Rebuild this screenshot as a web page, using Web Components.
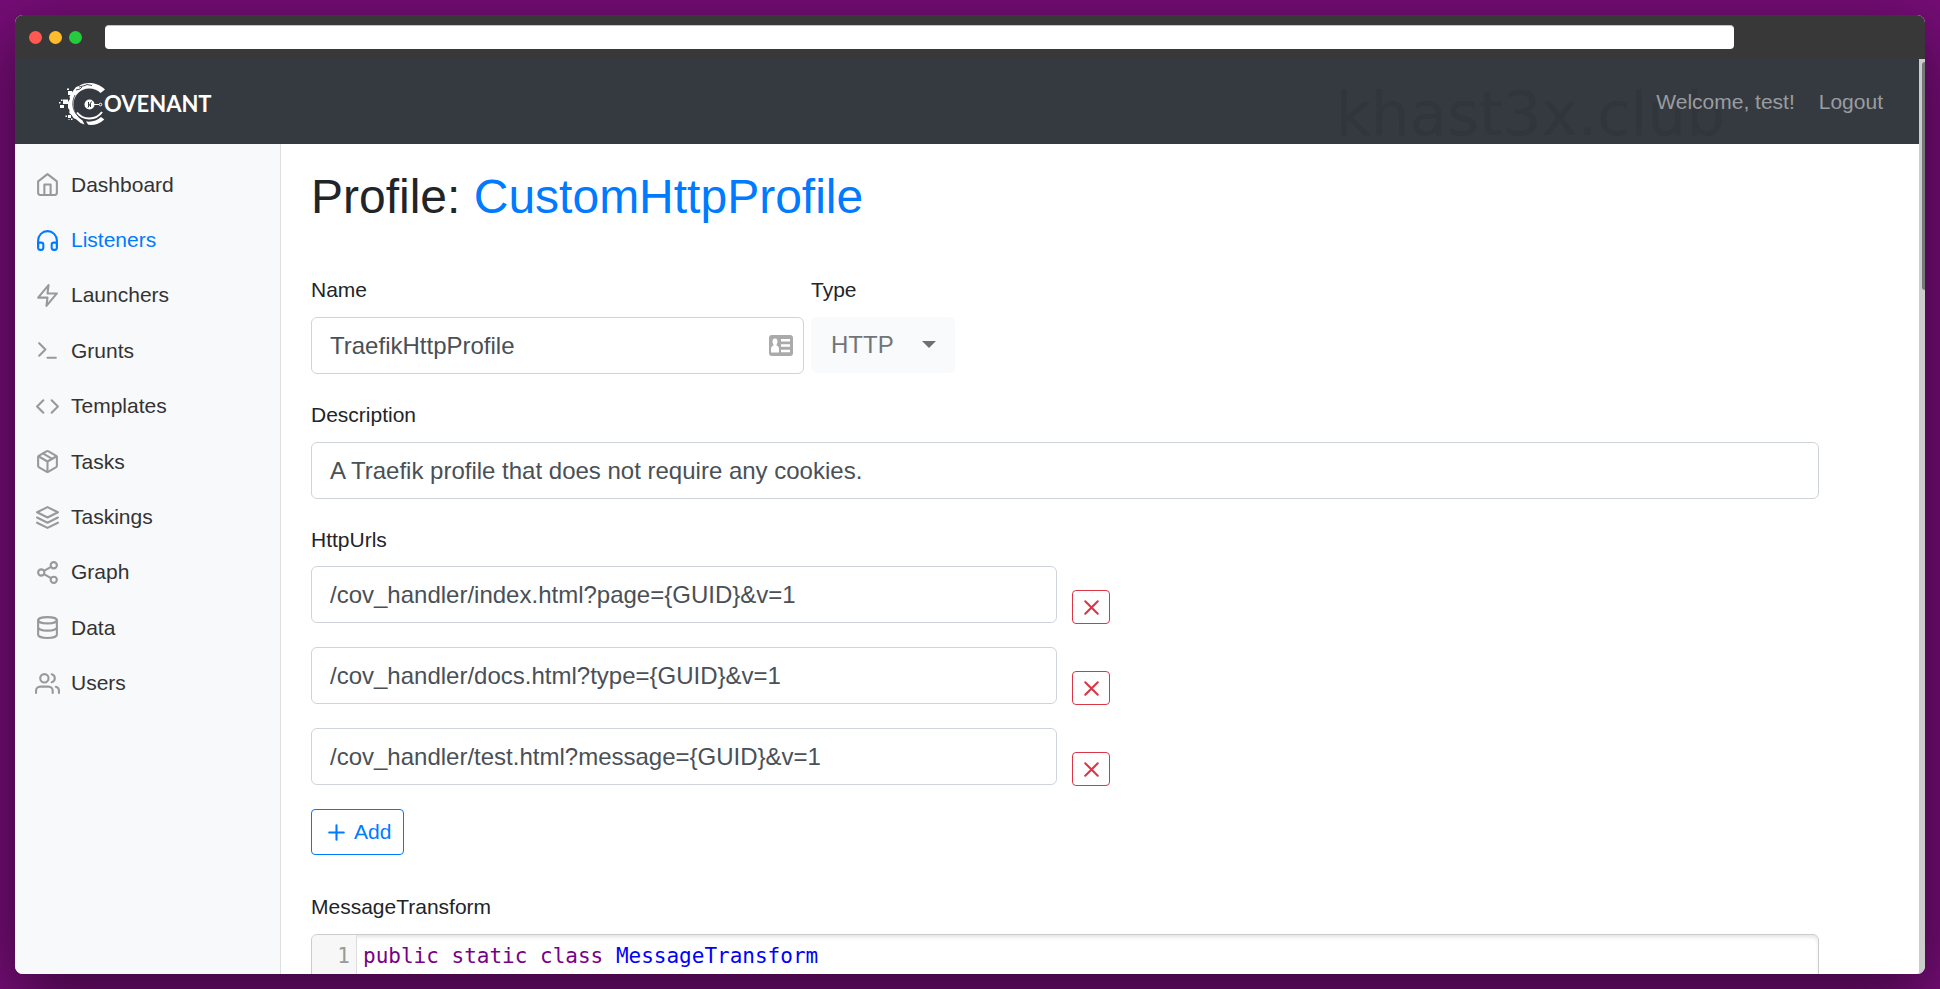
<!DOCTYPE html>
<html lang="en">
<head>
<meta charset="utf-8">
<title>Covenant</title>
<style>
  html, body { height: 100%; margin: 0; }
  body {
    box-sizing: border-box;
    padding: 15px;
    overflow: hidden;
    background: #760d77;
    font-family: "Liberation Sans", Arial, sans-serif;
    font-size: 21px;
    line-height: 32px;
    color: #212529;
  }
</style>
</head>
<body>
<browser-window>
  <nav-bar slot="nav" user="test"></nav-bar>
  <side-bar slot="side"></side-bar>
  <profile-form></profile-form>
</browser-window>

<script>
const define = (name, render) => customElements.define(name, class extends HTMLElement {
  constructor() {
    super();
    this.attachShadow({ mode: "open" });
  }
  connectedCallback() {
    const template = document.createElement("template");
    template.innerHTML = `<style>*{box-sizing:border-box}</style>` + render(this);
    this.shadowRoot.replaceChildren(template.content.cloneNode(true));
  }
});

const icons = {
  home: '<path d="M3 9l9-7 9 7v11a2 2 0 0 1-2 2H5a2 2 0 0 1-2-2z"/><path d="M9 22V12h6v10"/>',
  headphones: '<path d="M3 18v-6a9 9 0 0 1 18 0v6"/><path d="M21 19a2 2 0 0 1-2 2h-1a2 2 0 0 1-2-2v-3a2 2 0 0 1 2-2h3zM3 19a2 2 0 0 0 2 2h1a2 2 0 0 0 2-2v-3a2 2 0 0 0-2-2H3z"/>',
  zap: '<path d="M13 2L3 14h9l-1 8 10-12h-9l1-8z"/>',
  terminal: '<path d="M4 17l6-6-6-6M12 19h8"/>',
  code: '<path d="M16 18l6-6-6-6M8 6l-6 6 6 6"/>',
  package: '<path d="M16.5 9.4l-9-5.19M21 16V8a2 2 0 0 0-1-1.73l-7-4a2 2 0 0 0-2 0l-7 4A2 2 0 0 0 3 8v8a2 2 0 0 0 1 1.73l7 4a2 2 0 0 0 2 0l7-4A2 2 0 0 0 21 16z"/><path d="M3.27 6.96L12 12.01l8.73-5.05M12 22.08V12"/>',
  layers: '<path d="M12 2L2 7l10 5 10-5-10-5zM2 17l10 5 10-5M2 12l10 5 10-5"/>',
  share: '<circle cx="18" cy="5" r="3"/><circle cx="6" cy="12" r="3"/><circle cx="18" cy="19" r="3"/><path d="M8.59 13.51l6.83 3.98M15.41 6.51l-6.82 3.98"/>',
  database: '<ellipse cx="12" cy="5" rx="9" ry="3"/><path d="M21 12c0 1.66-4 3-9 3s-9-1.34-9-3"/><path d="M3 5v14c0 1.66 4 3 9 3s9-1.34 9-3V5"/>',
  users: '<path d="M17 21v-2a4 4 0 0 0-4-4H5a4 4 0 0 0-4 4v2"/><circle cx="9" cy="7" r="4"/><path d="M23 21v-2a4 4 0 0 0-3-3.87M16 3.13a4 4 0 0 1 0 7.75"/>',
  plus: '<path d="M12 5v14M5 12h14"/>',
  x: '<path d="M18 6L6 18M6 6l12 12"/>'
};

define("line-icon", el => `
  <style>
    :host { display: block; width: 25px; height: 25px; flex: none; }
    svg { display: block; width: 100%; height: 100%; fill: none; stroke: currentColor; stroke-width: 2; stroke-linecap: round; stroke-linejoin: round; }
  </style>
  <svg viewBox="0 0 24 24" aria-hidden="true">${icons[el.getAttribute("name")]}</svg>`);

define("browser-window", () => `
  <style>
    :host { display: flex; flex-direction: column; height: 100%; border-radius: 8px; overflow: hidden; background: #fff; box-shadow: 0 20px 68px rgba(0,0,0,.55); }
    .title { flex: none; display: flex; align-items: center; height: 44px; padding: 0 10% 0 14px; background: #383838; }
    .dots { display: flex; gap: 7px; margin-right: 23px; }
    .dots i { width: 13px; height: 13px; border-radius: 50%; background: #ff5a52; }
    .dots i:nth-child(2) { background: #ffbd2e; }
    .dots i:nth-child(3) { background: #27c93f; }
    input { flex: 1; min-width: 0; height: 24px; padding: 0 8px; border: 0; border-top: 1px solid #c4c4c4; border-radius: 4px; background: #fff; font: 14px "Liberation Sans", sans-serif; }
    .view { flex: 1; min-height: 0; display: flex; }
    .page { flex: 1; min-width: 0; display: flex; flex-direction: column; }
    .columns { flex: 1; min-height: 0; display: flex; }
    .content { flex: 1; min-width: 0; overflow: hidden; }
    .track { flex: none; width: 6px; padding: 3px 0 0 3px; background: #ccc; }
    .thumb { height: 25%; border-radius: 3px 0 0 3px; background: #747879; }
  </style>
  <div class="title">
    <div class="dots"><i></i><i></i><i></i></div>
    <input type="text" aria-label="Address">
  </div>
  <div class="view">
    <div class="page">
      <slot name="nav"></slot>
      <div class="columns">
        <slot name="side"></slot>
        <div class="content"><slot></slot></div>
      </div>
    </div>
    <div class="track"><div class="thumb"></div></div>
  </div>`);

define("covenant-logo", () => `
  <style>
    :host { display: block; padding-top: 4px; }
    svg { display: block; width: 154px; height: 42px; fill: #fff; }
    text { font: 700 22px Lato, sans-serif; }
  </style>
  <svg viewBox="0 0 154 42" role="img" aria-label="Covenant">
    <path d="M46 6.500C41 1.500 35.500 0 30 0 26 0 22.500 1 20 3l-3 1-3 4-1 1.500-2.500 4 .5 2.500-2 3V25l1.500 2-.2 3 2.200 2 2 3 3 1.500 4 3.500 4 1.500-2-4C18 34 14.500 28 14.500 21.500 14.500 12 22 5.500 30 5.500c5 0 8.500 1.500 11.500 4.500z"/>
    <path d="M16 12c-4 8-2.500 16 3.500 21.500" fill="none" stroke="#353a41" stroke-width=".8"/>
    <path d="M20 4l6-1.500 2-1 5 1M17 7l4-1 2-2" fill="none" stroke="#353a41" stroke-width=".9"/>
    <path d="M18 29.500C24 37.500 37 37.500 43 29" fill="none" stroke="#fff" stroke-width="2"/>
    <path d="M27 38.500c6 .7 11-.8 15-4.500l3.300 2.500c-5 4.500-10.500 6-16 5.300z"/>
    <path d="M24 36l3.500 5.500" stroke="#353a41" stroke-width="1"/>
    <circle cx="30.500" cy="21.500" r="5"/>
    <path d="M29 24.500l3.500-6M29.500 19v4M31.500 21v3" stroke="#353a41" stroke-width="1"/>
    <path d="M35 21.500h5" stroke="#fff" stroke-width="1"/>
    <circle cx="41.500" cy="21.500" r="1.300" fill="none" stroke="#fff" stroke-width="1"/>
    <path d="M9 8h4v4H9zM8 5.500h2v1.500H8zM4 16.500h5v4.500H4zM1 22h4v3H1zM0 19h1.500v1.500H0zM2 16.500h1.500V18H2zM9 32h3v3H9zM6.500 32.500H8V34H6.500zM12 35.500h1.500V37H12zM9.500 36h1v1h-1z"/>
    <text x="45" y="29">OVENANT</text>
  </svg>`);

define("nav-bar", el => `
  <style>
    :host { position: relative; flex: none; display: flex; align-items: center; height: 85px; padding: 0 36px 0 44px; background: #353a41; }
    nav { position: relative; display: flex; gap: 24px; margin-left: auto; }
    a { color: #9a9da0; text-decoration: none; }
    .mark { position: absolute; right: 194px; top: 24px; font: 61px/61px "DejaVu Sans", sans-serif; color: #31353c; }
  </style>
  <covenant-logo></covenant-logo>
  <span class="mark">khast3x.club</span>
  <nav><a href="#profile">Welcome, ${el.getAttribute("user")}!</a><a href="#logout">Logout</a></nav>`);

const pages = [
  ["home", "Dashboard"], ["headphones", "Listeners"], ["zap", "Launchers"], ["terminal", "Grunts"],
  ["code", "Templates"], ["package", "Tasks"], ["layers", "Taskings"], ["share", "Graph"],
  ["database", "Data"], ["users", "Users"]
];

define("side-bar", () => `
  <style>
    :host { flex: none; box-sizing: border-box; width: 266px; padding-top: 13px; border-right: 1px solid #dcdfe2; background: #f8f9fb; }
    ul { display: grid; grid-auto-rows: 1fr; height: 554px; margin: 0; padding: 0; list-style: none; }
    a { display: flex; align-items: center; gap: 11px; height: 100%; padding-left: 20px; color: #333; text-decoration: none; }
    line-icon { color: #999; }
    a[aria-current], a[aria-current] line-icon { color: #007bff; }
  </style>
  <nav><ul>${pages.map(([icon, name]) => `
    <li><a href="#${name}"${name === "Listeners" ? ' aria-current="page"' : ""}><line-icon name="${icon}"></line-icon>${name}</a></li>`).join("")}
  </ul></nav>`);

const control = `
    label { display: block; margin-bottom: 11px; }
    input, select { display: block; width: 100%; height: 57px; margin: 0; padding: 0 18px; border: 1px solid #ced4da; border-radius: 6px; background: #fff; color: #495057; font: 24px "Liberation Sans", Arial, sans-serif; }`;

define("text-field", el => `
  <style>
    :host { display: block; }
    ${control}
    .box { position: relative; }
    svg { position: absolute; right: 11px; top: 18px; width: 24px; height: 21px; }
  </style>
  ${el.hasAttribute("label") ? `<label for="f">${el.getAttribute("label")}</label>` : ""}
  <div class="box">
    <input id="f" type="text" value="${el.getAttribute("value").replace(/&/g, "&amp;")}"${el.hasAttribute("label") ? "" : ' aria-label="Url"'}>
    ${el.hasAttribute("card") ? `<svg viewBox="0 0 24 21" aria-hidden="true"><rect width="24" height="21" rx="3" fill="#aaa"/><path d="M6 3.500c1.800 0 2.500 1.300 2.500 3S7.500 9 7.500 10.500c1.800.5 2.500 1.500 2.500 3.500v3.500H2V14c0-2 .7-3 2.500-3.500C4.500 9 3.500 8.200 3.500 6.500s.7-3 2.500-3zM12 4h9v2.500h-9zM12 9.300h9v2.500h-9zM12 14.700h9v2.500h-9z" fill="#fff"/></svg>` : ""}
  </div>`);

define("type-select", () => `
  <style>
    :host { display: block; width: 144px; }
    ${control}
    .box { position: relative; }
    select { appearance: none; height: 56px; padding: 0 20px 2px; border: 0; background: #f9fafc; color: #727578; opacity: 1; }
    svg { position: absolute; right: 19px; top: 24px; width: 14px; height: 7px; fill: #6c7175; pointer-events: none; }
  </style>
  <label for="t">Type</label>
  <div class="box">
    <select id="t"><option>HTTP</option></select>
    <svg viewBox="0 0 14 7" aria-hidden="true"><path d="M0 0h14L7 7z"/></svg>
  </div>`);

define("url-row", el => `
  <style>
    :host { display: flex; align-items: flex-start; gap: 15px; height: 58px; }
    text-field { width: calc(50% - 8px); }
    button { align-self: flex-end; display: flex; align-items: center; justify-content: center; width: 38px; height: 34px; padding: 0; border: 1px solid #dc3545; border-radius: 4px; background: #fff; color: #dc3545; }
  </style>
  <text-field value="${el.getAttribute("value").replace(/&/g, "&amp;")}"></text-field>
  <button type="button" aria-label="Remove url"><line-icon name="x"></line-icon></button>`);

define("code-editor", () => `
  <style>
    :host { display: block; height: 300px; overflow: hidden; border: 1px solid #ccc; border-radius: 6px; background: #fff; box-shadow: inset 0 3px 4px -1px rgba(0,0,0,.12); font: 21px/32px "DejaVu Sans Mono", monospace; }
    .line { display: flex; height: 100%; }
    .no { width: 45px; padding: 5px 6px 0 0; border-right: 1px solid #ddd; background: #f7f7f7; color: #999; text-align: right; }
    code { padding: 5px 0 0 6px; font: inherit; white-space: pre; color: #708; }
    b { font-weight: 400; color: #00f; }
  </style>
  <div class="line"><span class="no">1</span><code>public static class <b>MessageTransform</b></code></div>`);

define("profile-form", () => `
  <style>
    :host { display: block; padding: 24px 100px 0 30px; }
    h1 { margin: 0 0 48px; font-size: 48px; line-height: 58px; font-weight: 400; }
    a { color: #007bff; text-decoration: none; }
    .row { display: flex; gap: 7px; }
    .row text-field { width: calc((100% + 13px) / 3 - 14px); }
    .stack { display: grid; gap: 25px; }
    fieldset { min-width: 0; margin: 0; padding: 0; border: 0; }
    legend { display: block; padding: 0; margin-bottom: 10px; }
    .label { display: block; margin-bottom: 11px; }
    .urls { display: grid; gap: 23px; }
    .add { display: flex; align-items: center; gap: 5px; height: 46px; padding: 0 12px; justify-self: start; border: 1px solid #007bff; border-radius: 4px; background: #fff; color: #007bff; font: inherit; }
    .transform { margin-top: 11px; }
  </style>
  <h1>Profile: <a href="#profile">CustomHttpProfile</a></h1>
  <form class="stack">
    <div class="row">
      <text-field label="Name" value="TraefikHttpProfile" card></text-field>
      <type-select></type-select>
    </div>
    <text-field label="Description" value="A Traefik profile that does not require any cookies."></text-field>
    <fieldset>
      <legend>HttpUrls</legend>
      <div class="urls">
        <url-row value="/cov_handler/index.html?page={GUID}&v=1"></url-row>
        <url-row value="/cov_handler/docs.html?type={GUID}&v=1"></url-row>
        <url-row value="/cov_handler/test.html?message={GUID}&v=1"></url-row>
        <button class="add" type="button"><line-icon name="plus"></line-icon>Add</button>
      </div>
    </fieldset>
    <div class="transform">
      <span class="label">MessageTransform</span>
      <code-editor></code-editor>
    </div>
  </form>`);
</script>
</body>
</html>
